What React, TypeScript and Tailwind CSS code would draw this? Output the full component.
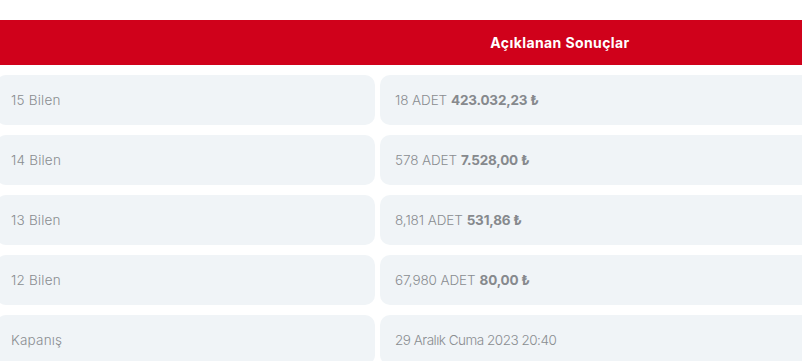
import React from 'react';

const rows = [
  { label: '15 Bilen', count: '18 ADET', amount: '423.032,23 ₺' },
  { label: '14 Bilen', count: '578 ADET', amount: '7.528,00 ₺' },
  { label: '13 Bilen', count: '8,181 ADET', amount: '531,86 ₺' },
  { label: '12 Bilen', count: '67,980 ADET', amount: '80,00 ₺' },
];

const Cell = ({ children, className = '' }: { children: React.ReactNode; className?: string }) => (
  <div className={`h-[50px] flex items-center rounded-[10px] bg-[#f0f4f7] px-[15px] text-[13.5px] font-light text-[#8a8d91] ${className}`}>
    {children}
  </div>
);

export default function App() {
  return (
    <div className="w-[802px] h-[361px] overflow-hidden bg-white pt-[20px]" style={{ fontFamily: 'Inter, "Noto Sans", sans-serif' }}>
      <div className="flex h-[45px] w-[840px] -ml-[4px] bg-[#d0011b]">
        <div className="w-[384px] shrink-0" />
        <div className="w-[360px] flex items-center justify-center text-[14px] font-bold tracking-[0.4px] text-white">
          Açıklanan Sonuçlar
        </div>
      </div>
      <div className="flex flex-col gap-[10px] mt-[10px] -ml-[4px] w-[860px]">
        {rows.map((r) => (
          <div key={r.label} className="flex gap-[5px]">
            <Cell className="w-[379px] shrink-0 tracking-[0.2px]">{r.label}</Cell>
            <Cell className="flex-1 tracking-[-0.1px]">
              {r.count}
              <span className="ml-[4px] font-bold text-[#86898d] tracking-[-0.2px]">{r.amount}</span>
            </Cell>
          </div>
        ))}
        <div className="flex gap-[5px]">
          <Cell className="w-[379px] shrink-0 tracking-[0.2px]">Kapanış</Cell>
          <Cell className="flex-1 tracking-[-0.5px]">29 Aralık Cuma 2023 20:40</Cell>
        </div>
      </div>
    </div>
  );
}
